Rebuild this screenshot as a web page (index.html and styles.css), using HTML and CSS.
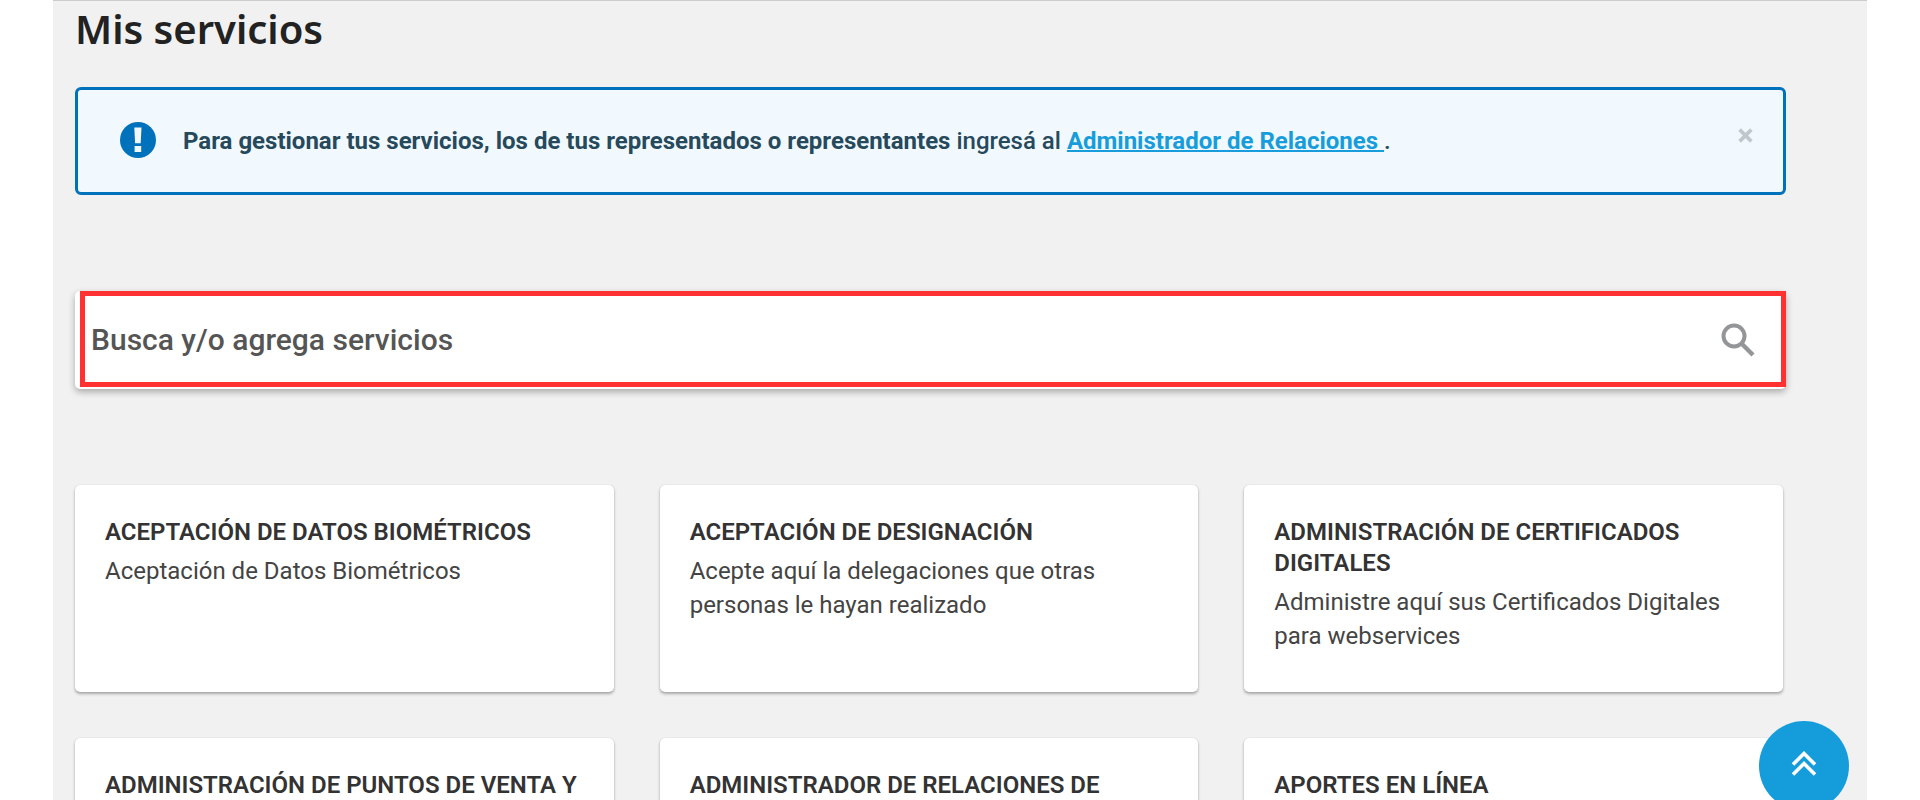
FILE: index.html
```html
<!DOCTYPE html>
<html lang="es">
<head>
<meta charset="utf-8">
<title>Mis servicios</title>
<link rel="stylesheet" href="styles.css">
</head>
<body>
<main class="page">
  <h1 class="page-title">Mis servicios</h1>

  <div class="alert" role="alert">
    <svg class="alert-icon" viewBox="0 0 36 36" aria-hidden="true">
      <circle cx="18" cy="18" r="18" fill="#0072bb"/>
      <path d="M14.3 5.5h7.2l-.8 15.800h-5.600zM14.600 24h6.600v6h-6.600z" fill="#f1f9ff"/>
    </svg>
    <p class="alert-text"><strong>Para gestionar tus servicios, los de tus representados o representantes</strong> ingresá al <a class="alert-link" href="#relaciones">Administrador de Relaciones&nbsp;</a>.</p>
    <button class="alert-close" type="button" aria-label="Cerrar">
      <svg class="close-icon" viewBox="0 0 14 14" aria-hidden="true"><path d="M1.500 1.500l11 11M12.500 1.500l-11 11" stroke="#c1c7cb" stroke-width="3.400"/></svg>
    </button>
  </div>

  <form class="search">
    <div class="search-frame">
      <input class="search-input" type="text" aria-label="Busca y/o agrega servicios" placeholder="Busca y/o agrega servicios">
      <button class="search-button" type="button" aria-label="Buscar">
        <svg class="search-icon" viewBox="0 0 34 34" aria-hidden="true"><circle cx="13" cy="13" r="10.500" fill="none" stroke="#939598" stroke-width="4"/><path d="M20.500 20.500l11.500 11.500" stroke="#939598" stroke-width="4.400"/></svg>
      </button>
    </div>
  </form>

  <section class="cards" aria-label="Servicios">
    <a class="card" href="#s1"><h2 class="card-title">ACEPTACIÓN DE DATOS BIOMÉTRICOS</h2><p class="card-text">Aceptación de Datos Biométricos</p></a>
    <a class="card" href="#s2"><h2 class="card-title">ACEPTACIÓN DE DESIGNACIÓN</h2><p class="card-text">Acepte aquí la delegaciones que otras personas le hayan realizado</p></a>
    <a class="card" href="#s3"><h2 class="card-title">ADMINISTRACIÓN DE CERTIFICADOS DIGITALES</h2><p class="card-text">Administre aquí sus Certificados Digitales para webservices</p></a>
    <a class="card" href="#s4"><h2 class="card-title">ADMINISTRACIÓN DE PUNTOS DE VENTA Y</h2></a>
    <a class="card" href="#s5"><h2 class="card-title">ADMINISTRADOR DE RELACIONES DE</h2></a>
    <a class="card" href="#s6"><h2 class="card-title">APORTES EN LÍNEA</h2></a>
  </section>
</main>
<button class="to-top" type="button" aria-label="Volver arriba">
  <svg class="to-top-icon" viewBox="0 0 26 26" aria-hidden="true"><path d="M2 13.500L13 2.500l11 11M2 23.500l11-11 11 11" fill="none" stroke="#fff" stroke-width="3.600"/></svg>
</button>
</body>
</html>
```
FILE: styles.css
```css
* { box-sizing: border-box; }

body {
  margin: 0;
  height: 100vh;
  overflow: hidden;
  background: #fff;
  font-family: Roboto, "Liberation Sans", sans-serif;
  color: #333;
}

.page {
  min-height: 100vh;
  margin: 0 53px;
  padding: 0 81px 0 22px;
  border-top: 1px solid #ccc;
  background: #f1f1f1;
}

.page-title {
  margin: 0 0 30px;
  font-family: "Noto Sans", sans-serif;
  font-size: 40px;
  line-height: 56px;
  font-weight: 600;
  color: #222;
}

.alert {
  display: flex;
  align-items: flex-start;
  min-height: 108px;
  padding: 32px 24px 24px 42px;
  border: 3px solid #0072bb;
  border-radius: 6px;
  background: #f1f9ff;
}

.alert-icon { width: 36px; height: 36px; }

.alert-text {
  flex: 1;
  margin: 0 0 0 27px;
  font-size: 24px;
  line-height: 38px;
  font-weight: 500;
  color: #27495c;
}

.alert-text strong { font-weight: 700; }

.alert-link {
  font-weight: 700;
  color: #179ddb;
  text-decoration: underline;
  text-decoration-thickness: 2px;
}

.alert-close {
  display: flex;
  padding: 6px;
  border: 0;
  background: none;
}

.close-icon { width: 15px; height: 15px; }

.search {
  margin: 96px 0 0;
  padding: 0 0 2px 5px;
  border-radius: 5px;
  background: #fff;
  box-shadow: 0 3px 7px rgba(0, 0, 0, .3);
}

.search-frame {
  display: flex;
  align-items: center;
  height: 96px;
  border: 5px solid #ff3131;
}

.search-input {
  flex: 1;
  min-width: 0;
  padding: 2px 6px 0;
  border: 0;
  outline: 0;
  background: none;
  font: 500 30px/40px Roboto, sans-serif;
  color: #555;
}

.search-input::placeholder { color: #555; opacity: 1; }

.search-button {
  display: flex;
  padding: 2px 26px 0;
  border: 0;
  background: none;
}

.search-icon { width: 34px; height: 34px; }

.cards {
  display: grid;
  grid-template-columns: repeat(3, 1fr);
  grid-auto-rows: 207px;
  gap: 46px;
  margin: 96px 3px 0 0;
}

.card {
  padding: 32px 30px 24px;
  border-radius: 5px;
  background: #fff;
  box-shadow: 0 2px 3px rgba(0, 0, 0, .3), 0 0 1px rgba(0, 0, 0, .2);
  color: #333;
  text-decoration: none;
}

.card-title {
  margin: 0 0 6px;
  font-size: 24px;
  line-height: 31px;
  font-weight: 600;
}

.card-text {
  margin: 0;
  font-size: 24px;
  line-height: 34px;
  color: #444;
}

.to-top {
  position: fixed;
  right: 71px;
  bottom: -11px;
  display: flex;
  align-items: flex-start;
  justify-content: center;
  width: 90px;
  height: 90px;
  padding: 30px 0 0;
  border: 0;
  border-radius: 50%;
  background: #159ddb;
}

.to-top-icon { width: 26px; height: 26px; }
```
